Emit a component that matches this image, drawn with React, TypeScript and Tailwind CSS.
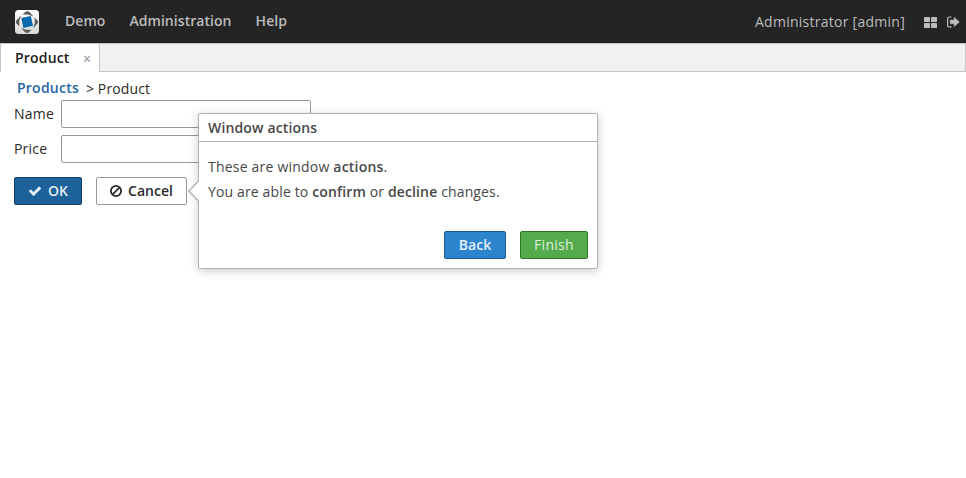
import React from "react";

function Logo() {
  return (
    <svg className="h-6 w-6 shrink-0" viewBox="0 0 24 24">
      <defs>
        <linearGradient id="tile" x1="0" y1="0" x2="0" y2="1">
          <stop offset="0" stopColor="#ffffff" />
          <stop offset="1" stopColor="#d8d8d8" />
        </linearGradient>
      </defs>
      <rect width="24" height="24" rx="3.5" fill="url(#tile)" />
      <path d="M7.6 4.4 11 1.2 14 1.6 18.4 6.4 13 4.4z" fill="#5c5c5c" />
      <path d="M19.6 7.6 23.2 11.4 22.6 13.6 17.8 18.4 19.8 13z" fill="#5c5c5c" />
      <path d="M16.6 19.8 13.2 23 10.4 22.6 5.8 17.8 11 19.8z" fill="#5c5c5c" />
      <path d="M4.4 16.6 0.8 12.8 1.3 10.4 6.2 5.6 4.2 11z" fill="#5c5c5c" />
      <path d="M6.3 7.9 15.8 6.1 18 15.8 8.4 18z" fill="#0868ae" />
    </svg>
  );
}

function CheckIcon() {
  return (
    <svg className="h-[14px] w-[14px]" viewBox="0 0 1792 1792" fill="currentColor">
      <path d="M1671 566q0 40-28 68l-724 724-136 136q-28 28-68 28t-68-28l-136-136-362-362q-28-28-28-68t28-68l136-136q28-28 68-28t68 28l294 295 656-657q28-28 68-28t68 28l136 136q28 28 28 68z" />
    </svg>
  );
}

function BanIcon() {
  return (
    <svg className="h-3 w-3" viewBox="0 0 12 12" fill="none" stroke="currentColor" strokeWidth="1.8">
      <circle cx="6" cy="6" r="5.1" />
      <path d="M2.4 9.6 9.6 2.4" />
    </svg>
  );
}

function GridIcon() {
  return (
    <svg className="h-[11px] w-[13px]" viewBox="0 0 13 11" fill="currentColor">
      <rect x="0" y="0" width="6" height="5" rx="0.8" />
      <rect x="7" y="0" width="6" height="5" rx="0.8" />
      <rect x="0" y="6" width="6" height="5" rx="0.8" />
      <rect x="7" y="6" width="6" height="5" rx="0.8" />
    </svg>
  );
}

function SignOutIcon() {
  return (
    <svg className="h-3 w-[13px]" viewBox="0 0 13 12">
      <path d="M4.6 1H2.2Q0.6 1 0.6 2.6V9.2Q0.6 10.8 2.2 10.8H4.6" fill="none" stroke="currentColor" strokeWidth="1.2" />
      <path d="M3.2 4H7.2V1.2L12.4 5.9 7.2 10.6V7.8H3.2z" fill="currentColor" stroke="currentColor" strokeWidth="0.5" strokeLinejoin="round" />
    </svg>
  );
}

function Field({ label }: { label: string }) {
  return (
    <label className="flex h-7 items-center">
      <span className="w-[47px] pb-[2px] tracking-[0.2px]">{label}</span>
      <input className="h-7 w-[250px] rounded-[2px] border border-[#979797] bg-white outline-none" />
    </label>
  );
}

function StepPopup() {
  return (
    <section className="absolute left-[198px] top-[113px] flex h-[156px] w-[400px] flex-col rounded-[2px] border border-[#b3b3b3] bg-white text-[#474747] shadow-[0_2px_10px_rgba(0,0,0,0.2)]">
      <svg className="absolute -left-[11px] top-[66px] h-[22px] w-[11px]" viewBox="0 0 11 22">
        <path d="M11.5 0 0.8 11 11.5 22" fill="#fff" stroke="#b3b3b3" strokeWidth="1.5" />
      </svg>
      <h2 className="h-7 border-b border-[#b3b3b3] pl-[9px] leading-[27px] font-semibold tracking-[0.15px]">Window actions</h2>
      <div className="grow pl-[9px] pt-[12px] leading-[25px]">
        <p className="tracking-[0.21px]">These are window <b className="font-semibold">actions</b>.</p>
        <p className="tracking-[0.14px]">You are able to <b className="font-semibold">confirm</b> or <b className="font-semibold">decline</b> changes.</p>
      </div>
      <div className="flex justify-end gap-[14px] pr-[9px] pb-[9px]">
        <button className="h-7 w-[62px] rounded-[2px] border border-[#1b5a8c] bg-[#2c84cc] leading-[26px] font-semibold text-[#e5eff8]">Back</button>
        <button className="h-7 w-[68px] rounded-[2px] border border-[#2f762a] bg-[#54ab4c] leading-[26px] tracking-[0.3px] text-[#dceeda]">Finish</button>
      </div>
    </section>
  );
}

export default function App() {
  return (
    <div className="relative h-[478px] w-[966px] overflow-hidden bg-white font-['Open_Sans','Noto_Sans',sans-serif] text-[14px] text-[#2a2a2a]">
      <header className="flex h-[43px] items-center border-t border-[#1b2020] bg-[#242424] pl-[15px] pr-[6px] text-[#bcbcbc]">
        <Logo />
        <nav className="flex gap-6 pl-[26px] pb-[4px] font-semibold tracking-[0.05px]">
          <span>Demo</span>
          <span>Administration</span>
          <span>Help</span>
        </nav>
        <span className="ml-auto mr-[19px] pb-[2px] tracking-[0.26px]">Administrator [admin]</span>
        <GridIcon />
        <span className="ml-[10px]"><SignOutIcon /></span>
      </header>
      <div className="flex h-[29px] border border-[#c5c5c5] bg-[#f1f1f1]">
        <div className="flex h-[28px] w-[99px] items-center justify-between border-r border-[#c5c5c5] bg-white pl-[14px] pr-[8px]">
          <span className="pb-[2px] font-semibold tracking-[0.18px] text-[#202020]">Product</span>
          <span className="text-[#8a8a8a]">×</span>
        </div>
      </div>
      <main className="pl-[14px] pt-[6px]">
        <div className="flex h-[22px] pl-[3px] leading-[22px]">
          <a className="-mt-px mr-[7px] font-semibold tracking-[0.23px] text-[#1d66a6]">Products</a>
          <span className="tracking-[0.12px]">&gt; Product</span>
        </div>
        <div className="flex flex-col gap-[7px]">
          <Field label="Name" />
          <Field label="Price" />
        </div>
        <div className="mt-[14px] flex gap-[14px]">
          <button className="flex h-7 w-[68px] items-center justify-center gap-[6px] rounded-[2px] border border-[#123f66] bg-[#1c6199] font-semibold text-[#e4edf4]">
            <CheckIcon />
            <span className="pb-[2px]">OK</span>
          </button>
          <button className="flex h-7 w-[91px] items-center justify-center gap-[6px] rounded-[2px] border border-[#979797] bg-white font-semibold">
            <BanIcon />
            <span className="pb-[2px]">Cancel</span>
          </button>
        </div>
      </main>
      <StepPopup />
    </div>
  );
}
